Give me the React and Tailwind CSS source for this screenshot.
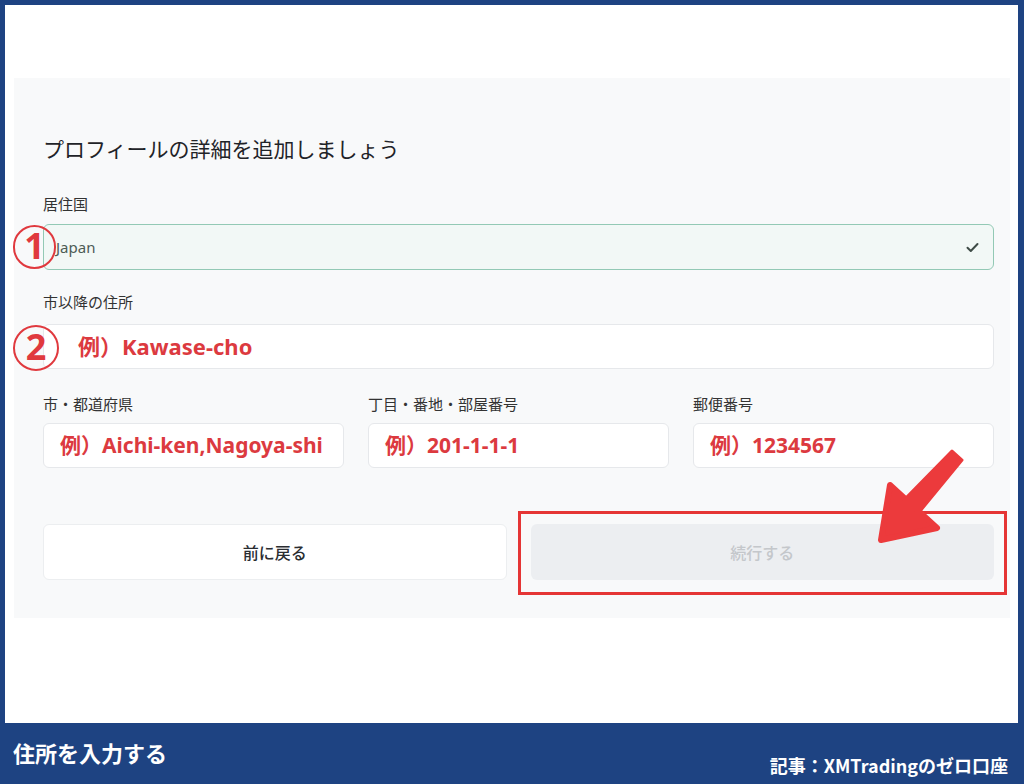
import React from 'react'

const jp = { fontFamily: '"Noto Sans CJK JP", "Noto Sans", sans-serif' }
const red = { fontFamily: '"Noto Sans", "Noto Sans CJK JP", sans-serif' }

function Mark({ n, size }) {
  return (
    <div
      className={`absolute flex items-center justify-center rounded-full border-2 border-[#e0393e] text-[#e0393e] font-bold leading-none ${size}`}
      style={red}
    >
      <span className="text-[36px] -mt-[2px]">{n}</span>
    </div>
  )
}

function Field({ label, value, pl = 'pl-[16px]' }) {
  return (
    <div className="flex flex-col">
      <div className="text-[15px] leading-[18px] text-[#333]" style={jp}>{label}</div>
      <div className={`mt-[10px] h-[45px] rounded-[6px] border border-[#e6e8eb] bg-white flex items-center ${pl}`}>
        <span className="text-[21px] font-bold text-[#dc3a3f]" style={red}>{value}</span>
      </div>
    </div>
  )
}

export default function App() {
  return (
    <div className="relative w-[1024px] h-[784px] bg-[#1e4382] flex flex-col overflow-hidden" style={jp}>
      <div className="mt-[5px] ml-[5px] mr-[6px] h-[718px] bg-white pt-[73px] pl-[9px] pr-[8px]">
        <div className="bg-[#f8f9fa] pt-[58px] pl-[29px] pr-[16px] pb-[38px]">
          <h1 className="text-[21px] leading-[24px] text-[#1f2328]">プロフィールの詳細を追加しましょう</h1>

          <div className="mt-[35px] text-[15px] leading-[18px] text-[#333]">居住国</div>
          <div className="relative mt-[11px]">
            <div className="h-[46px] rounded-[6px] border border-[#93c9b5] bg-[#f2f8f6] flex items-center pl-[12px] pr-[14px]">
              <span className="flex-1 text-[15px] text-[#4d5c55]" style={red}>Japan</span>
              <svg width="13" height="11" viewBox="0 0 13 11" fill="none">
                <path d="M1.5 5.8 L4.8 9 L11.5 2" stroke="#3f4c47" strokeWidth="2" strokeLinecap="round" strokeLinejoin="round" />
              </svg>
            </div>
            <Mark n="1" size="w-[43px] h-[44px] left-[-30px] top-[1px]" />
          </div>

          <div className="mt-[23px] text-[15px] leading-[18px] text-[#333]">市以降の住所</div>
          <div className="relative mt-[13px]">
            <div className="h-[45px] rounded-[6px] border border-[#e6e8eb] bg-white flex items-center pl-[34px]">
              <span className="text-[22px] font-bold text-[#dc3a3f]" style={red}>例）Kawase-cho</span>
            </div>
            <Mark n="2" size="w-[46px] h-[46px] left-[-30px] top-[1px]" />
          </div>

          <div className="mt-[26px] grid grid-cols-3 gap-x-[24px]">
            <Field label="市・都道府県" value="例）Aichi-ken,Nagoya-shi" pl="pl-[16px]" />
            <Field label="丁目・番地・部屋番号" value="例）201-1-1-1" />
            <Field label="郵便番号" value="例）1234567" />
          </div>

          <div className="mt-[56px] grid grid-cols-2 gap-x-[24px]">
            <button className="h-[56px] rounded-[6px] border border-[#eceef0] bg-white text-[16px] font-medium text-[#2a2d31]">前に戻る</button>
            <div className="relative">
              <button className="w-full h-[56px] rounded-[6px] bg-[#eceef1] text-[16px] font-medium text-[#c4c7cb]">続行する</button>
              <div className="absolute left-[-13px] right-[-13px] top-[-13px] bottom-[-15px] border-[3px] border-[#e53535]" />
            </div>
          </div>
        </div>
      </div>

      <div className="flex-1 relative px-[13px]">
        <div className="pt-[15px] text-[22px] leading-[28px] font-bold text-white">住所を入力する</div>
        <div className="absolute right-[16px] bottom-[8px] text-[18px] leading-[22px] font-bold text-white">記事：XMTradingのゼロ口座</div>
      </div>

      <svg className="absolute left-0 top-0 pointer-events-none" width="1024" height="784" viewBox="0 0 1024 784">
        <polygon points="952,451 962,460 916,516 901,503" fill="#ec3a3c" stroke="#ec3a3c" strokeWidth="3" strokeLinejoin="round" />
        <polygon points="881,540 890,485 937,528" fill="#ec3a3c" stroke="#ec3a3c" strokeWidth="6" strokeLinejoin="round" />
      </svg>
    </div>
  )
}
